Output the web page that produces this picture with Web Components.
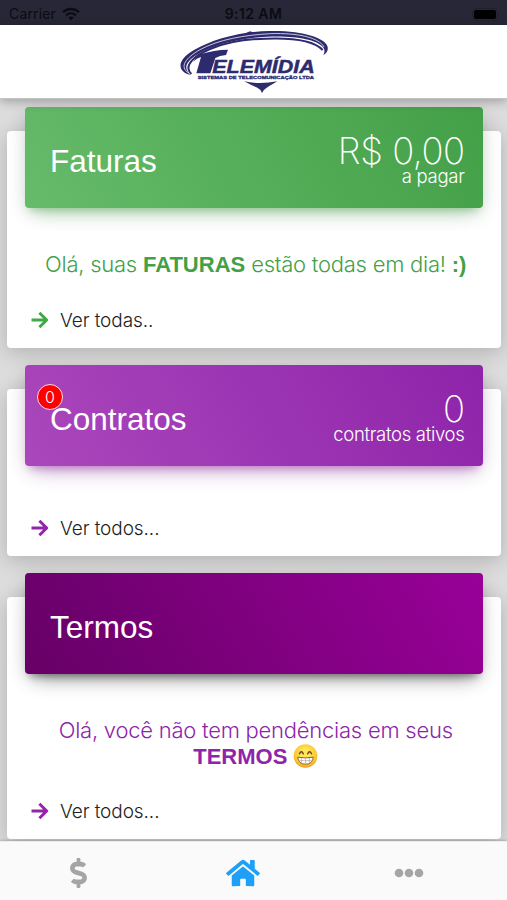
<!DOCTYPE html>
<html lang="pt-BR">
<head>
  <meta charset="UTF-8">
  <meta name="viewport" content="width=device-width, initial-scale=1.0">
  <title>Telemídia</title>
  <style>
    body {
      margin: 0;
      height: 900px;
      overflow: hidden;
      background: #dcdcdc;
      font-family: 'Liberation Sans', Arial, sans-serif;
    }

    summary-card b {
      font-family: 'Liberation Sans', Arial, sans-serif;
      font-weight: 700;
      letter-spacing: 0;
    }
  </style>
</head>
<body>
  <app-shell>
    <status-bar slot="top" carrier="Carrier" time="9:12 AM"></status-bar>
    <app-header slot="top"></app-header>

    <summary-card label="Faturas" value="R$ 0,00" caption="a pagar" link="Ver todas.."
      style="--from: #66bb6a; --to: #43a047; --accent: #43a047; --arrow: #3fab46; --glow: rgba(76, 175, 80, .4); --card-height: 217px">
      <span>Olá, suas <b>FATURAS</b> estão todas em dia! <b>:)</b></span>
    </summary-card>

    <summary-card label="Contratos" value="0" caption="contratos ativos" link="Ver todos..." badge="0"
      style="--from: #ab47bc; --to: #8e24aa; --accent: #8e24aa; --arrow: #9424ac; --glow: rgba(156, 39, 176, .4); --card-height: 167px"></summary-card>

    <summary-card label="Termos" link="Ver todos..."
      style="--from: #660066; --to: #990099; --accent: #8e24aa; --arrow: #9424ac; --glow: rgba(0, 0, 0, .4); --card-height: 242px">
      <span>Olá, você não tem pendências em seus<br><b>TERMOS</b> <grin-face></grin-face></span>
    </summary-card>

    <tab-bar slot="bottom"></tab-bar>
  </app-shell>

  <script>
    class BaseElement extends HTMLElement {
      constructor() {
        super();
        this.attachShadow({ mode: 'open' });
      }

      connectedCallback() {
        this.shadowRoot.innerHTML = this.render();
      }

      attr(name) {
        return this.getAttribute(name) || '';
      }
    }

    class AppShell extends BaseElement {
      render() {
        return `
          <style>
            :host {
              display: flex;
              flex-direction: column;
              width: 507px;
              height: 900px;
            }
            .top { position: relative; z-index: 2; flex: none; }
            main {
              flex: 1;
              min-height: 0;
              box-sizing: border-box;
              padding: 32px 6px 0 7px;
              display: flex;
              flex-direction: column;
              gap: 41px;
            }
          </style>
          <div class="top"><slot name="top"></slot></div>
          <main><slot></slot></main>
          <slot name="bottom"></slot>
        `;
      }
    }

    class StatusBar extends BaseElement {
      render() {
        return `
          <style>
            :host {
              display: grid;
              grid-template-columns: 1fr auto 1fr;
              align-items: center;
              height: 25px;
              box-sizing: border-box;
              padding: 3px 9px 0;
              background: #272737;
              color: #0b0b11;
              font: 14px/20px Inter, 'Liberation Sans', sans-serif;
            }
            .left { display: flex; align-items: center; gap: 6px; letter-spacing: .15px; }
            .time { font-weight: 600; letter-spacing: .4px; }
            .battery { justify-self: end; margin-right: -2px; }
            svg { display: block; }
          </style>
          <div class="left">
            <span>${this.attr('carrier')}</span>
            <svg width="18" height="14" viewBox="0 0 18 14" fill="none" stroke="#0b0b11" stroke-width="2.3">
              <path d="M1 5.2C5.6.9 12.4.9 17 5.2M4 8.3c2.9-2.6 7.1-2.6 10 0"/>
              <path d="M9 13.3 6.2 10.5c1.6-1.5 4-1.5 5.6 0z" fill="#0b0b11" stroke="none"/>
            </svg>
          </div>
          <span class="time">${this.attr('time')}</span>
          <svg class="battery" width="28" height="13" viewBox="0 0 28 13">
            <rect x=".5" y=".5" width="25" height="12" rx="3.5" fill="none" stroke="#20202c"/>
            <rect x="2" y="2" width="22" height="9" rx="2" fill="#000"/>
            <path d="M26.5 4.5q1.5 2 0 4z" fill="#20202c"/>
          </svg>
        `;
      }
    }

    class AppHeader extends BaseElement {
      render() {
        return `
          <style>
            :host {
              display: flex;
              justify-content: center;
              height: 74px;
              padding-left: 3px;
              background: #fff;
              border-bottom: 1px solid #c4c4c4;
              box-sizing: border-box;
              box-shadow: 0 2px 10px rgba(0, 0, 0, .3);
            }
          </style>
          <svg width="170" height="73" viewBox="0 0 510 219" fill="#2d2a6e" role="img" aria-label="Telemídia">
            <path d="M61 150C20 139 20 105 72 75 128 43 208 20 298 18 401 16 463 39 472 63c4 11-1 20-12 28 5-10 5-18-2-26C436 42 370 31 290 35 203 39 124 62 81 89 46 110 40 130 61 150z"/>
            <path d="M56 144C26 126 48 98 90 74 145 44 222 30 302 26c81-3 146 12 160 40" fill="none" stroke="#fff" stroke-width="2.2"/>
            <path d="M64 147C38 122 74 92 120 72 172 50 238 42 288 41c80-3 144 6 170 34" fill="none" stroke="#2d2a6e" stroke-width="6"/>
            <path d="M216 30l24-11 19 6z"/>
            <path d="M90 88q42-14 84-14l-6 16q-19 1-32 9l-15 46H79l14-49q-11 2-23 14 7-15 20-22z"/>
            <text x="127" y="144" font-family="'Liberation Sans', sans-serif" font-size="53" font-weight="700" font-style="italic" stroke="#2d2a6e" stroke-width="1.4" textLength="307" lengthAdjust="spacingAndGlyphs">ELEMÍDIA</text>
            <text x="83" y="161" font-family="'Liberation Sans', sans-serif" font-size="12.5" font-weight="700" stroke="#2d2a6e" stroke-width=".9" textLength="349" lengthAdjust="spacingAndGlyphs">SISTEMAS DE TELECOMUNICAÇÃO LTDA</text>
            <path d="M222 169q24 5 49 5 25 0 51-5-25 15-32 19-9 5-14 16-3-11-14-16-13-5-40-19z"/>
          </svg>
        `;
      }
    }

    class SummaryCard extends BaseElement {
      render() {
        const value = this.attr('value');
        const badge = this.attr('badge');
        return `
          <style>
            :host {
              display: flex;
              flex-direction: column;
              flex: none;
              box-sizing: border-box;
              height: var(--card-height);
              padding: 0 18.5px 16px 18px;
              background: #fff;
              border-radius: 4px;
              box-shadow: 0 4px 20px rgba(0, 0, 0, .2);
            }
            .banner {
              position: relative;
              display: flex;
              justify-content: space-between;
              align-items: center;
              flex: none;
              box-sizing: border-box;
              height: 101px;
              margin-top: -24px;
              padding: 0 18px 0 25px;
              border-radius: 4px;
              color: #fff;
              background: linear-gradient(60deg, var(--from), var(--to));
              box-shadow: 0 12px 20px -10px var(--glow), 0 4px 20px rgba(0, 0, 0, .12), 0 7px 8px -5px var(--glow);
            }
            .label { font-size: 31.5px; line-height: 36px; padding-top: 6px; }
            .figures {
              padding-top: 3px;
              text-align: right;
              font-family: Inter, 'Liberation Sans', sans-serif;
              font-weight: 300;
            }
            .value { font-size: 36.5px; line-height: 34px; letter-spacing: -.5px; font-weight: 250; }
            .caption { font-size: 18.5px; line-height: 17px; letter-spacing: -.3px; }
            .badge {
              position: absolute;
              left: 12px;
              top: 19px;
              width: 24px;
              height: 24px;
              border: 1.5px solid #ffd9e6;
              border-radius: 50%;
              background: #f00;
              font: 300 16px/25px Inter, 'Liberation Sans', sans-serif;
              text-align: center;
            }
            .message {
              flex: 1;
              padding: 43px 0 0 4px;
              text-align: center;
              white-space: nowrap;
              color: var(--accent);
              font: 300 22px/26px Inter, 'Liberation Sans', sans-serif;
              letter-spacing: -.24px;
            }
            ::slotted(span) { display: block; }
            .link {
              display: flex;
              align-items: center;
              gap: 11px;
              padding-left: 6px;
              color: #222;
              font: 300 19px/23px Inter, 'Liberation Sans', sans-serif;
              letter-spacing: -.08px;
            }
            .link svg { display: block; color: var(--arrow); margin-bottom: 1px; }
          </style>
          <div class="banner">
            <span class="label">${this.attr('label')}</span>
            ${value ? `<div class="figures"><div class="value">${value}</div><div class="caption">${this.attr('caption')}</div></div>` : ''}
            ${badge ? `<span class="badge">${badge}</span>` : ''}
          </div>
          <div class="message"><slot></slot></div>
          <div class="link">
            <svg width="18" height="18" viewBox="0 0 18 18" fill="none" stroke="currentColor" stroke-width="3" stroke-linejoin="round">
              <path d="M.5 9H15.5M8.4 1.7 15.7 9l-7.3 7.3"/>
            </svg>
            <span>${this.attr('link')}</span>
          </div>
        `;
      }
    }

    class GrinFace extends BaseElement {
      render() {
        return `
          <style>
            :host { display: inline-block; vertical-align: -4px; width: 25px; height: 24px; }
            svg { display: block; }
          </style>
          <svg width="25" height="24" viewBox="0 0 25 24" role="img" aria-label="😁">
            <defs>
              <radialGradient id="skin" cx=".5" cy=".4" r=".6">
                <stop offset=".3" stop-color="#ffe75a"/>
                <stop offset=".8" stop-color="#fbc42d"/>
                <stop offset="1" stop-color="#eb9420"/>
              </radialGradient>
            </defs>
            <circle cx="12.5" cy="12" r="11.8" fill="url(#skin)"/>
            <path d="M6.5 9.8q1.8-4 3.8 0M14.7 9.8q1.9-4 3.8 0" fill="none" stroke="#70451c" stroke-width="1.5" stroke-linecap="round"/>
            <path d="M4.7 13.2q7.8 1.4 15.6 0-.6 7-7.8 7t-7.8-7z" fill="#fff" stroke="#986124" stroke-width="1"/>
            <path d="M5.3 16.2q7.2 1.2 14.4 0M8.6 14v4.8M12.5 14v5.8M16.4 14v4.8" fill="none" stroke="#b3a898" stroke-width=".7"/>
          </svg>
        `;
      }
    }

    class TabBar extends BaseElement {
      render() {
        return `
          <style>
            :host {
              position: relative;
              display: grid;
              grid-template-columns: 157px 172px 160px;
              justify-items: center;
              align-items: center;
              flex: none;
              height: 59px;
              box-sizing: border-box;
              padding-top: 3px;
              border-top: 1px solid #ededed;
              background: #fafafa;
              box-shadow: 0 -1px 2px rgba(0, 0, 0, .18);
              color: #a5a5a5;
            }
            svg { display: block; fill: currentColor; }
            .active { color: #1ea0f8; }
          </style>
          <svg width="17" height="30" viewBox="0 0 288 512">
            <path d="M209.2 233.4l-108-31.6C88.7 198.2 80 186.5 80 173.5c0-16.3 13.2-29.5 29.5-29.5h66.3c12.2 0 24.2 3.7 34.2 10.5 6.1 4.1 14.3 3.1 19.5-2l34.8-34c7.1-6.9 6.1-18.4-1.8-24.5C238 74.800 207.400 64.100 176 64V16c0-8.800-7.200-16-16-16h-32c-8.800 0-16 7.200-16 16v48h-2.500C45.800 64-5.400 118.700.5 183.600c4.200 46.100 39.400 83.600 83.800 96.600l102.500 30c12.500 3.700 21.200 15.300 21.200 28.300 0 16.300-13.200 29.500-29.500 29.500h-66.300C100 368 88 364.300 78 357.500c-6.100-4.100-14.300-3.100-19.500 2l-34.800 34c-7.100 6.900-6.100 18.400 1.800 24.500 24.500 19.200 55.100 29.900 86.500 30v48c0 8.800 7.200 16 16 16h32c8.800 0 16-7.200 16-16v-48.200c46.600-.9 90.300-28.600 105.700-72.700 21.500-61.600-14.600-124.800-72.500-141.700z"/>
          </svg>
          <svg class="active" width="34" height="30" viewBox="0 0 576 512">
            <path d="M280.4 148.3L96 300.1V464a16 16 0 0 0 16 16l112.1-.3a16 16 0 0 0 15.9-16V368a16 16 0 0 1 16-16h64a16 16 0 0 1 16 16v95.6a16 16 0 0 0 16 16.1l112 .3a16 16 0 0 0 16-16V300L295.7 148.3a12.2 12.2 0 0 0-15.3 0zM571.6 251.5L488 182.6V44.1a12 12 0 0 0-12-12h-56a12 12 0 0 0-12 12v72.6L318.5 43a48 48 0 0 0-61 0L4.3 251.5a12 12 0 0 0-1.6 16.9l25.5 31a12 12 0 0 0 16.9 1.6L280.4 107.2a12.2 12.2 0 0 1 15.3 0L530.9 301a12 12 0 0 0 16.9-1.6l25.5-31a12 12 0 0 0-1.7-16.9z"/>
          </svg>
          <svg width="30" height="10" viewBox="0 0 30 10">
            <circle cx="5" cy="5" r="4.3"/>
            <circle cx="15" cy="5" r="4.3"/>
            <circle cx="25" cy="5" r="4.3"/>
          </svg>
        `;
      }
    }

    customElements.define('app-shell', AppShell);
    customElements.define('status-bar', StatusBar);
    customElements.define('app-header', AppHeader);
    customElements.define('summary-card', SummaryCard);
    customElements.define('grin-face', GrinFace);
    customElements.define('tab-bar', TabBar);
  </script>
</body>
</html>
